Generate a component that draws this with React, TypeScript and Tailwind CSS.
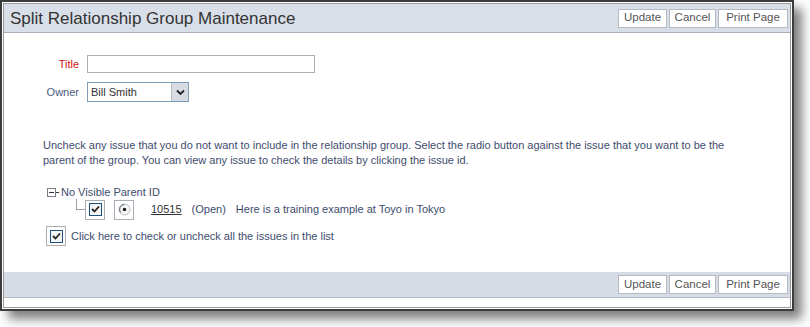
import { ReactNode } from 'react'

function Btn({ children, w }: { children: ReactNode; w: string }) {
  return (
    <button className={`${w} h-[19px] bg-white border border-[#b4b9c2] text-[11.5px] leading-none text-[#555]`}>
      {children}
    </button>
  )
}

function ButtonBar() {
  return (
    <div className="flex gap-[2px]">
      <Btn w="w-[49px]">Update</Btn>
      <Btn w="w-[47px]">Cancel</Btn>
      <Btn w="w-[70px]">Print Page</Btn>
    </div>
  )
}

// boxed checkbox as drawn by the old browser theme
function CheckBox() {
  return (
    <div className="w-[20px] h-[20px] border border-[#a9aeb6] bg-white flex items-center justify-center">
      <div className="w-[13px] h-[13px] border border-[#1c5180] bg-[#f4f4f4] flex items-center justify-center">
        <svg width="9" height="9" viewBox="0 0 9 9">
          <path d="M1 4 L3.5 6.5 L8 1.5" stroke="#222" strokeWidth="1.8" fill="none" />
        </svg>
      </div>
    </div>
  )
}

function RadioBox() {
  return (
    <div className="w-[20px] h-[20px] border border-[#a9aeb6] bg-white flex items-center justify-center">
      <svg width="13" height="13" viewBox="0 0 13 13">
        <circle cx="6.5" cy="6.5" r="5.5" fill="#f7f7f7" stroke="#b9bcc2" />
        <path d="M2.6 9.5 A5 5 0 0 1 6.5 1.5" stroke="#5a6577" strokeWidth="1" fill="none" />
        <circle cx="6.5" cy="6.5" r="1.8" fill="#222" />
      </svg>
    </div>
  )
}

export default function App() {
  return (
    <div className="w-[810px] h-[327px] bg-white font-['Liberation_Sans',Arial,sans-serif]">
      <div className="w-[794px] h-[311px] border-2 border-[#3c3c3c] bg-white shadow-[8px_8px_10px_rgba(0,0,0,0.5)] p-px">
        <div className="h-full border border-[#9a9a9a] flex flex-col">
          {/* header */}
          <div className="h-[29px] bg-[#d9dfe8] border-b border-[#a7aeb9] flex items-center justify-between pl-[6px] pr-[2px]">
            <h1 className="text-[17px] text-[#333] leading-none">Split Relationship Group Maintenance</h1>
            <ButtonBar />
          </div>

          {/* body */}
          <div className="flex-1 flex flex-col text-[11px] text-[#3e4c6d]">
            <div className="flex flex-col gap-[9px] pt-[22px]">
              <div className="flex items-center">
                <label className="w-[75px] text-right text-[#d01010]">Title</label>
                <input className="ml-[8px] w-[228px] h-[18px] border border-[#a9aeb6] bg-white" />
              </div>
              <div className="flex items-center">
                <label className="w-[75px] text-right text-[#4b5b80]">Owner</label>
                <div className="ml-[8px] w-[102px] h-[20px] border border-[#7f9db9] bg-white flex items-center">
                  <span className="flex-1 pl-[3px] text-[#333]">Bill Smith</span>
                  <div className="w-[17px] h-[18px] bg-[#d8dce2] border-l border-[#b5bcc6] flex items-center justify-center">
                    <svg width="9" height="7" viewBox="0 0 9 7">
                      <path d="M1 1.5 L4.5 5 L8 1.5" stroke="#222" strokeWidth="1.8" fill="none" />
                    </svg>
                  </div>
                </div>
              </div>
            </div>

            <p className="mt-[36px] ml-[39px] w-[700px] leading-[15px]">
              Uncheck any issue that you do not want to include in the relationship group. Select the radio button against the issue that you want to be the parent of the group. You can view any issue to check the details by clicking the issue id.
            </p>

            <div className="mt-[18px] ml-[43px] flex flex-col">
              <div className="flex items-center h-[12px]">
                <svg width="12" height="9" viewBox="0 0 12 9">
                  <rect x="0.5" y="0.5" width="8" height="8" fill="#fff" stroke="#7a7f88" />
                  <path d="M2 4.5 H7 M9 4.5 H12" stroke="#333" />
                </svg>
                <span className="ml-[2px]">No Visible Parent ID</span>
              </div>
              <div className="flex items-center h-[21px] mt-[1px]">
                <div className="w-[38px] h-full relative">
                  <div className="absolute left-[29px] top-0 w-[9px] h-[11px] border-l border-b border-[#9aa0a8]" />
                </div>
                <CheckBox />
                <div className="ml-[9px]">
                  <RadioBox />
                </div>
                <a className="ml-[17px] underline text-[#333]">10515</a>
                <span className="ml-[10px]">(Open)</span>
                <span className="ml-[10px]">Here is a training example at Toyo in Tokyo</span>
              </div>
              <div className="flex items-center mt-[6px] -ml-[1px]">
                <CheckBox />
                <span className="ml-[5px]">Click here to check or uncheck all the issues in the list</span>
              </div>
            </div>
          </div>

          {/* footer */}
          <div className="h-[26px] bg-[#d6dce6] border-b border-[#b5bbc5] flex items-center justify-end pr-[2px]">
            <ButtonBar />
          </div>
          <div className="h-[9px]" />
        </div>
      </div>
    </div>
  )
}
